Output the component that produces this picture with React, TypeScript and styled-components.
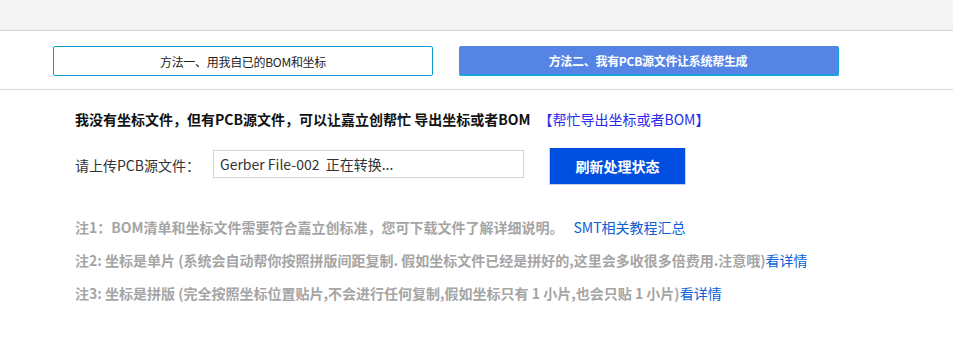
import styled, { createGlobalStyle } from 'styled-components';
import React from 'react';

const GlobalStyle = createGlobalStyle`
    html, body {
        margin: 0;
        padding: 0;
        background: #ffffff;
        font-family: "Noto Sans CJK SC", "Noto Sans", sans-serif;
    }
`

const TopBar = styled.div`
    height: 30px;
    background: #f4f4f4;
    border-bottom: 1px solid #d4d4d4;
`

const MethodBar = styled.div`
    display: flex;
    gap: 26px;
    padding: 15px 0 13px 53px;
    border-bottom: 1px solid #dadada;
`

const MethodButton = styled.div<{ $active?: boolean }>`
    width: 380px;
    height: 30px;
    box-sizing: border-box;
    display: flex;
    align-items: center;
    justify-content: center;
    font-size: 12px;
    letter-spacing: -0.3px;
    border: 1px solid #0a9fd8;
    border-width: ${p => (p.$active ? '0 2px 2px 0' : '1px')};
    border-color: ${p => (p.$active ? '#16a3de' : '#0a9fd8')};
    border-radius: 2px;
    background: ${p => (p.$active ? '#5584e4' : '#ffffff')};
    color: ${p => (p.$active ? '#ffffff' : '#222222')};
    font-weight: ${p => (p.$active ? 700 : 400)};
`

const Content = styled.div`
    padding: 19px 0 0 75px;
`

const Heading = styled.div`
    font-size: 14px;
    font-weight: 700;
    color: #111111;
    line-height: 20px;
`

const HelpLink = styled.span`
    font-weight: 400;
    color: #2a2af0;
    margin-left: 8px;
`

const UploadRow = styled.div`
    display: flex;
    align-items: flex-start;
    margin-top: 19px;
`

const Label = styled.span`
    font-size: 14px;
    line-height: 20px;
    margin-top: 7px;
    color: #333333;
    width: 138px;
`

const FileBox = styled.div`
    width: 311px;
    height: 28px;
    margin-top: 2px;
    box-sizing: border-box;
    border: 1px solid #d4d4d4;
    display: flex;
    align-items: center;
    padding-left: 6px;
    font-size: 14px;
    color: #333333;
    white-space: pre;
`

const RefreshButton = styled.div`
    margin-left: 25px;
    width: 137px;
    height: 37px;
    box-sizing: border-box;
    background: #004fe0;
    border: 1px solid #c8d2e8;
    border-top: 0;
    display: flex;
    align-items: center;
    justify-content: center;
    color: #ffffff;
    font-size: 14px;
    font-weight: 700;
`

const Notes = styled.div`
    margin-top: 32px;
    display: flex;
    flex-direction: column;
    gap: 13px;
`

const Note = styled.div`
    font-size: 14px;
    line-height: 20px;
    color: #a5a5a5;
    font-weight: 700;
`

const NoteLink = styled.span<{ $gap?: boolean }>`
    font-weight: 400;
    color: #0a5fd6;
    margin-left: ${p => (p.$gap ? '10px' : '0')};
`

function App() {
    return (
        <>
            <GlobalStyle />
            <TopBar />
            <MethodBar>
                <MethodButton>方法一、用我自已的BOM和坐标</MethodButton>
                <MethodButton $active>方法二、我有PCB源文件让系统帮生成</MethodButton>
            </MethodBar>
            <Content>
                <Heading>
                    我没有坐标文件，但有PCB源文件，可以让嘉立创帮忙 导出坐标或者BOM
                    <HelpLink>【帮忙导出坐标或者BOM】</HelpLink>
                </Heading>
                <UploadRow>
                    <Label>请上传PCB源文件：</Label>
                    <FileBox>{'Gerber File-002  正在转换...'}</FileBox>
                    <RefreshButton>刷新处理状态</RefreshButton>
                </UploadRow>
                <Notes>
                    <Note>
                        注1：BOM清单和坐标文件需要符合嘉立创标准，您可下载文件了解详细说明。
                        <NoteLink $gap>SMT相关教程汇总</NoteLink>
                    </Note>
                    <Note>
                        注2: 坐标是单片 (系统会自动帮你按照拼版间距复制. 假如坐标文件已经是拼好的,这里会多收很多倍费用.注意哦)
                        <NoteLink>看详情</NoteLink>
                    </Note>
                    <Note>
                        注3: 坐标是拼版 (完全按照坐标位置贴片,不会进行任何复制,假如坐标只有 1 小片,也会只贴 1 小片)
                        <NoteLink>看详情</NoteLink>
                    </Note>
                </Notes>
            </Content>
        </>
    );
}

export default App;
